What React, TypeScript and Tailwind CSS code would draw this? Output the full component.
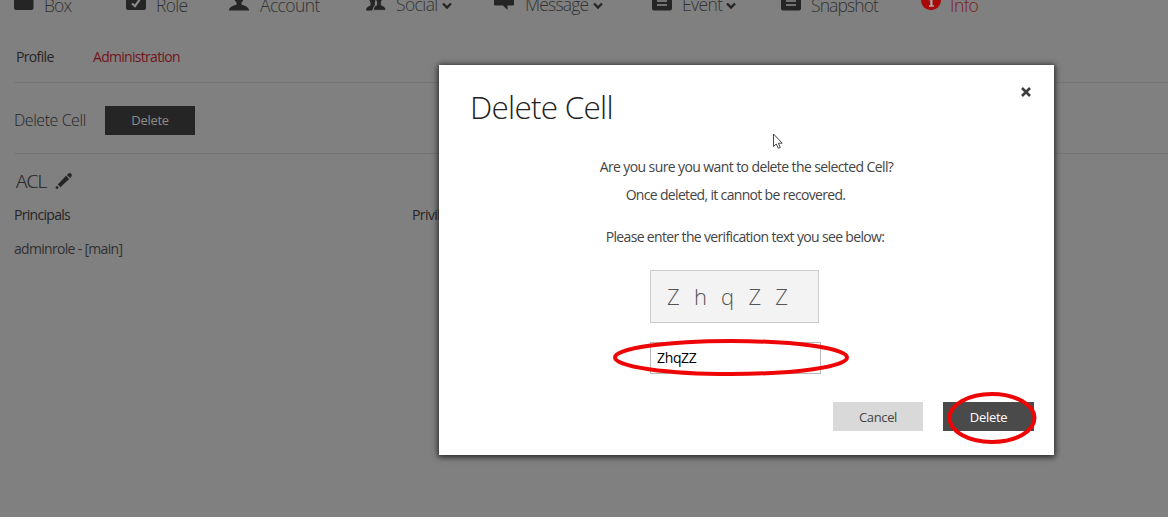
import React from "react";

type IconName = "box" | "role" | "account" | "social" | "message" | "list" | "info";

function NavIcon({ name }: { name: IconName }) {
  return (
    <svg viewBox="0 0 20 20" className="h-5 w-5 shrink-0" fill="currentColor">
      {name === "box" && <rect x="0" y="0" width="19.5" height="19" rx="2" />}
      {name === "role" && (
        <>
          <rect x="0" y="0" width="20" height="19" rx="2" />
          <path d="M6 12.5l3 2.7 5-7.2" fill="none" stroke="#8c8c8c" strokeWidth="2.2" />
        </>
      )}
      {name === "account" && (
        <path d="M10 0c3.500 0 5 2.500 5 5.500 0 2.800-1.200 5-2.600 6.300v1.700c3.600 1.300 7.600 2.700 7.600 5.900H0c0-3.200 4-4.600 7.600-5.900v-1.700C6.200 10.500 5 8.300 5 5.500 5 2.500 6.500 0 10 0z" />
      )}
      {name === "social" && (
        <>
          <path d="M6.500 1c3 0 4 2 4 5 0 2-.8 3.600-1.700 5v3L6 19.400H0c0-3 2-4 4.500-5v-2.900C3.500 10 3 8 3 6c0-3 1-5 3.500-5z" />
          <path d="M13 0c3 0 4 2.200 4 5.200 0 2.300-.7 4.300-1.700 5.800v3c2.700 1 4.700 2.400 4.700 5.400H7.500c0-3 .5-4.400 3.200-5.400v-3C9.700 9.500 9 7.500 9 5.200 9 2.200 10 0 13 0z" stroke="#808080" strokeWidth="1" />
        </>
      )}
      {name === "message" && <path d="M1 0h18a1 1 0 011 1v12.500a1 1 0 01-1 1h-5.500V19L9 14.500H1a1 1 0 01-1-1V1a1 1 0 011-1z" />}
      {name === "list" && (
        <>
          <rect x="0" y="0" width="20" height="19.400" rx="2" />
          <path d="M5 6h10M5 10h10M5 14h10" stroke="#8c8c8c" strokeWidth="1.500" />
        </>
      )}
      {name === "info" && (
        <>
          <circle cx="10" cy="9.300" r="10" />
          <path d="M7.500 7.800h4v6.400h1.500v1.500H8v-1.500h1.300V9.300H7.500z" fill="#a9a9a9" />
        </>
      )}
    </svg>
  );
}

function Chevron() {
  return (
    <svg viewBox="0 0 10 8" className="mt-[3px] h-2 w-2.5 shrink-0">
      <path d="M1 1.500l4 4 4-4" fill="none" stroke="#252525" strokeWidth="2.400" />
    </svg>
  );
}

type NavItem = { label: string; icon: IconName; style: string; menu?: boolean; active?: boolean };

const nav: NavItem[] = [
  { label: "Box", icon: "box", style: "w-[28px] ml-[10px] tracking-[-0.9px]" },
  { label: "Role", icon: "role", style: "w-[32px] ml-[10px] tracking-[-0.7px]" },
  { label: "Account", icon: "account", style: "w-[61px] ml-[11px] tracking-[-0.6px]" },
  { label: "Social", icon: "social", style: "w-[46px] ml-[10px] -mt-px tracking-[-0.6px]", menu: true },
  { label: "Message", icon: "message", style: "w-[68px] ml-[11px] -mt-px tracking-[-0.8px]", menu: true },
  { label: "Event", icon: "list", style: "w-[44px] ml-[10px] -mt-px tracking-[-0.6px]", menu: true },
  { label: "Snapshot", icon: "list", style: "w-[68px] ml-[10px] tracking-[-0.9px]" },
  { label: "Info", icon: "info", style: "w-[30px] ml-[9px] tracking-[-0.5px]", active: true },
];

function Page() {
  return (
    <div className="h-[517px] bg-[#808080] pt-px text-[#252525]">
      <nav className="-mt-[10px] grid h-[26px] grid-cols-[112px_103px_137px_128px_158px_129px_140px_auto] items-start pl-[14px]">
        {nav.map((n) => (
          <div key={n.label} className={n.active ? "flex items-start text-[#a80a0a]" : "flex items-start"}>
            <NavIcon name={n.icon} />
            <span className={`whitespace-nowrap text-[17.500px] font-light leading-[28px] ${n.active ? "text-[#7d1a1a]" : "text-[#333]"} ${n.style}`}>
              {n.label}
            </span>
            {n.menu && <div className="pt-[8px]"><Chevron /></div>}
          </div>
        ))}
      </nav>
      <div className="flex h-[65px] items-center pl-[16px] pt-[15px] text-[14px] leading-5">
        <span className="w-[77px] tracking-[-0.65px]">Profile</span>
        <span className="tracking-[-0.7px] text-[#73141b]">Administration</span>
      </div>
      <section className="ml-[14px] flex h-[72px] items-center border-y border-[#757575] pt-[4px]">
        <span className="w-[91px] text-[16px] font-light tracking-[-0.45px]">Delete Cell</span>
        <button className="h-[29px] w-[90px] bg-[#252525] pt-[2px] text-[13px] tracking-[-0.3px] text-[#8c8c8c]">Delete</button>
      </section>
      <section className="pl-[14px]">
        <div className="flex h-[51px] items-center gap-[8px] pl-[2px] pt-[2px]">
          <h2 className="w-[31px] pt-px text-[19px] font-light tracking-[-0.9px] [-webkit-text-stroke:0.200px_#252525]">ACL</h2>
          <svg viewBox="0 0 18 18" className="h-[18px] w-[18px]" fill="#252525">
            <path d="M2.800 12.600l2.600 2.600L14.200 7 11 3.800z" />
            <path d="M11.900 3l1.300-1.300c.9-.9 2.200-.9 3 0s.8 2.100 0 3L15.100 6z" />
            <circle cx="2" cy="15.600" r="1.400" />
          </svg>
        </div>
        <div className="flex text-[14px] leading-5">
          <span className="w-[398px] tracking-[-0.7px]">Principals</span>
          <span className="tracking-[-0.6px]">Privileges</span>
        </div>
        <p className="mt-[14px] text-[14px] leading-5 tracking-[-0.69px] text-[#303030]">adminrole - [main]</p>
      </section>
    </div>
  );
}

function Dialog() {
  return (
    <div role="dialog" className="absolute left-[439px] top-[65px] flex h-[390px] w-[615px] flex-col bg-white text-[#444] shadow-[0_1px_6px_1px_rgba(0,0,0,0.75)]">
      <header className="flex h-[88px] shrink-0 items-start justify-between pl-[31px] pr-[23px]">
        <h1 className="pt-[21px] text-[31.500px] font-light leading-[42px] tracking-[-0.75px] text-[#222]">Delete Cell</h1>
        <svg viewBox="0 0 10 10" className="mt-[22px] h-[10px] w-[10px]">
          <path d="M1 1l8 8M9 1L1 9" stroke="#3d3d3d" strokeWidth="2.600" />
        </svg>
      </header>
      <div className="flex flex-col items-center text-[14px] leading-7">
        <p className="tracking-[-0.6px]">Are you sure you want to delete the selected Cell?</p>
        <p className="mr-[22px] tracking-[-0.67px]">Once deleted, it cannot be recovered.</p>
        <p className="mr-[3px] mt-[14px] tracking-[-0.66px]">Please enter the verification text you see below:</p>
      </div>
      <div className="ml-[211px] mt-[19px] flex h-[53px] w-[169px] shrink-0 items-center justify-between border border-[#ccc] bg-[#f3f3f3] pl-[16px] pr-[30px] text-[22px] font-light text-[#555]">
        {"ZhqZZ".split("").map((c, i) => <span key={i}>{c}</span>)}
      </div>
      <div className="ml-[211px] mt-[19px] flex h-[32px] w-[171px] shrink-0 items-center border border-[#b8b8b8] pb-px pl-[6px] text-[14px] tracking-[-0.35px] text-black">ZhqZZ</div>
      <footer className="mt-[28px] flex justify-end gap-[20px] pr-[20px] text-[13px]">
        <button className="h-[29px] w-[90px] bg-[#d9d9d9] pt-[2px] tracking-[-0.35px] text-[#444]">Cancel</button>
        <button className="h-[29px] w-[91px] bg-[#4a4a4a] pt-[2px] tracking-[-0.3px] text-white">Delete</button>
      </footer>
    </div>
  );
}

export default function App() {
  return (
    <div className="relative h-[520px] w-[1168px] overflow-hidden bg-white font-['Open_Sans','Noto_Sans',sans-serif]">
      <Page />
      <Dialog />
      <svg viewBox="0 0 13 18" className="absolute left-[772px] top-[133px] h-[18px] w-[13px]">
        <path d="M1.500 1v12.500l2.800-2.500 2 4.300 2-.9-2-4.200h3.900z" fill="#fff" stroke="#444" strokeWidth="1" />
      </svg>
      <svg viewBox="0 0 236 37" className="absolute left-[613px] top-[339px] h-[37px] w-[236px]">
        <ellipse cx="118" cy="18.500" rx="116" ry="16.500" fill="none" stroke="#ee0505" strokeWidth="4" />
      </svg>
      <svg viewBox="0 0 90 54" className="absolute left-[947px] top-[391px] h-[54px] w-[90px]">
        <ellipse cx="45" cy="27" rx="42.500" ry="24" fill="none" stroke="#ee0505" strokeWidth="4" />
      </svg>
    </div>
  );
}
